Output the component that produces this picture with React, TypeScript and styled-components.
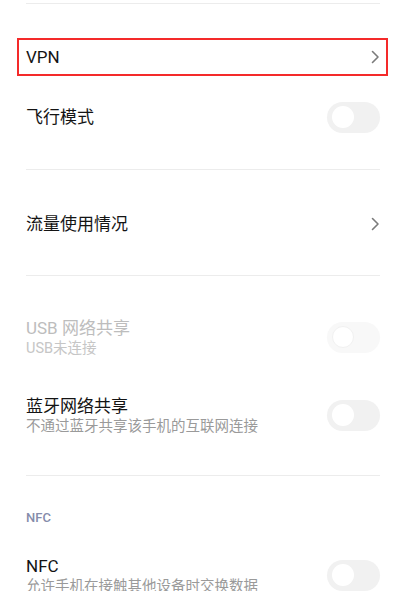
import React from "react";
import styled, { createGlobalStyle } from "styled-components";

const Global = createGlobalStyle`
  html, body { margin: 0; padding: 0; background: #ffffff; }
  body { font-family: Roboto, "Noto Sans CJK SC", sans-serif; overflow: hidden; }
  * { box-sizing: border-box; }
`;

const Page = styled.div`
  width: 400px;
  height: 591px;
  overflow: hidden;
  background: #fff;
  padding: 3px 20px 0 26px;
`;

const Divider = styled.div`
  height: 1px;
  background: #ececec;
`;

const Section = styled.div<{ $pt: number; $pb: number }>`
  display: flex;
  flex-direction: column;
  padding: ${(p) => p.$pt}px 0 ${(p) => p.$pb}px;
`;

const Row = styled.div<{ $h: number }>`
  position: relative;
  display: flex;
  align-items: center;
  justify-content: space-between;
  height: ${(p) => p.$h}px;
`;

const Highlight = styled.div`
  position: absolute;
  left: -9px;
  right: -8px;
  top: 11px;
  height: 38px;
  border: 2px solid #f42a2a;
  pointer-events: none;
`;

const Texts = styled.div`
  display: flex;
  flex-direction: column;
  padding-top: 3px;
`;

const Title = styled.div<{ $disabled?: boolean }>`
  font-size: 17px;
  line-height: 21px;
  color: ${(p) => (p.$disabled ? "#bdbdbd" : "#141414")};
`;

const Sub = styled.div<{ $disabled?: boolean }>`
  font-size: 14.5px;
  line-height: 20px;
  color: ${(p) => (p.$disabled ? "#c6c6c6" : "#9a9a9a")};
`;

const Header = styled.div`
  font-size: 13px;
  font-weight: 500;
  line-height: 18px;
  color: #868cab;
  padding-top: 33px;
  height: 60px;
`;

const Track = styled.div<{ $disabled?: boolean }>`
  flex: none;
  width: 53px;
  height: 31px;
  border-radius: 16px;
  background: ${(p) => (p.$disabled ? "#f8f8f8" : "#f1f1f1")};
  display: flex;
  align-items: center;
  padding-left: 5px;
`;

const Knob = styled.div<{ $disabled?: boolean }>`
  width: 22px;
  height: 22px;
  border-radius: 50%;
  background: #fff;
  border: ${(p) => (p.$disabled ? "1px solid #f1f1f1" : "none")};
`;

const Chevron = () => (
  <svg width="9" height="14" viewBox="0 0 9 14" style={{ flex: "none" }}>
    <path d="M1.5 1.5 L7 7 L1.5 12.5" fill="none" stroke="#7b7b7b" strokeWidth="1.6" strokeLinecap="round" strokeLinejoin="round" />
  </svg>
);

const Toggle = ({ disabled }: { disabled?: boolean }) => (
  <Track $disabled={disabled}>
    <Knob $disabled={disabled} />
  </Track>
);

export default function App() {
  return (
    <>
      <Global />
      <Page>
        <Divider />
        <Section $pt={23} $pb={22}>
          <Row $h={60}>
            <Highlight />
            <Title>VPN</Title>
            <Chevron />
          </Row>
          <Row $h={60}>
            <Title>飞行模式</Title>
            <Toggle />
          </Row>
        </Section>
        <Divider />
        <Section $pt={22} $pb={19}>
          <Row $h={64}>
            <Title>流量使用情况</Title>
            <Chevron />
          </Row>
        </Section>
        <Divider />
        <Section $pt={22} $pb={21}>
          <Row $h={78}>
            <Texts>
              <Title $disabled>USB 网络共享</Title>
              <Sub $disabled>USB未连接</Sub>
            </Texts>
            <Toggle disabled />
          </Row>
          <Row $h={78}>
            <Texts>
              <Title>蓝牙网络共享</Title>
              <Sub>不通过蓝牙共享该手机的互联网连接</Sub>
            </Texts>
            <Toggle />
          </Row>
        </Section>
        <Divider />
        <Header>NFC</Header>
        <Row $h={78}>
          <Texts>
            <Title>NFC</Title>
            <Sub>允许手机在接触其他设备时交换数据</Sub>
          </Texts>
          <Toggle />
        </Row>
      </Page>
    </>
  );
}
